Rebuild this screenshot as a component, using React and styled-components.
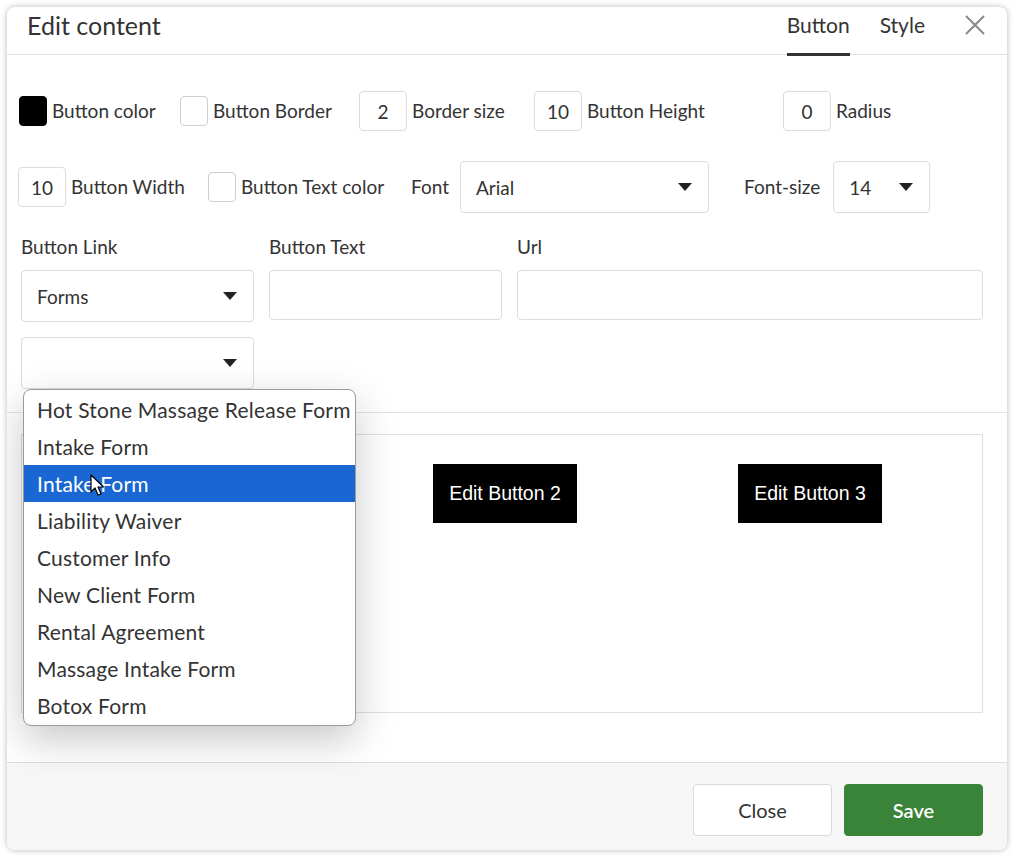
import React from 'react';
import styled, { createGlobalStyle } from 'styled-components';

const GlobalStyle = createGlobalStyle`
  html, body {
    margin: 0;
    padding: 0;
    background: #ffffff;
    font-family: 'Lato', 'Open Sans', sans-serif;
    color: #333;
  }
  * {
    box-sizing: border-box;
  }
`;

const Page = styled.div`
  width: 1015px;
  height: 858px;
  padding: 7px 8px 8px 7px;
`;

const Modal = styled.div`
  width: 1000px;
  height: 843px;
  background: #fff;
  border-radius: 8px;
  box-shadow: 0 0 6px rgba(0, 0, 0, 0.28);
  display: flex;
  flex-direction: column;
  overflow: hidden;
`;

const Header = styled.div`
  height: 48px;
  border-bottom: 1px solid #e3e3e3;
  display: flex;
  align-items: stretch;
  padding: 0 22px 0 20px;
`;

const Title = styled.h2`
  margin: 0;
  font-size: 25px;
  font-weight: 400;
  color: #333;
  flex: 1;
  line-height: 36px;
`;

const Tabs = styled.div`
  display: flex;
  align-items: stretch;
  gap: 30px;
`;

const Tab = styled.div`
  font-size: 21px;
  color: #333;
  line-height: 36px;
  border-bottom: 3px solid ${p => (p.$active ? '#333' : 'transparent')};
  margin-bottom: -2px;
`;

const CloseIcon = styled.button`
  border: 0;
  background: none;
  padding: 0;
  margin-left: 40px;
  height: 36px;
  display: flex;
  align-items: center;
  cursor: pointer;
`;

const Body = styled.div`
  flex: 1;
  padding: 36px 24px 0 14px;
  display: flex;
  flex-direction: column;
`;

const FieldRow = styled.div`
  display: flex;
  align-items: center;
  margin-left: ${p => p.$shift || 0}px;
  margin-top: ${p => p.$top || 0}px;
`;

const Field = styled.div`
  display: flex;
  align-items: center;
  gap: ${p => p.$gap || 5}px;
  width: ${p => (p.$w ? `${p.$w}px` : 'auto')};
  flex: none;
`;

const Swatch = styled.div`
  width: 28px;
  height: 30px;
  border-radius: 4px;
  border: 1px solid ${p => (p.$color === '#000' ? '#000' : '#cfcfcf')};
  background: ${p => p.$color};
`;

const NumberBox = styled.div`
  width: 48px;
  height: 40px;
  border: 1px solid #dcdcdc;
  border-radius: 4px;
  display: flex;
  align-items: center;
  justify-content: center;
  font-size: 19px;
  color: #333;
`;

const Label = styled.span`
  font-size: 19px;
  color: #333;
  white-space: nowrap;
  margin-top: -2px;
`;

const SelectBox = styled.div`
  position: relative;
  width: ${p => p.$w}px;
  height: 52px;
  border: 1px solid #dcdcdc;
  border-radius: 4px;
  display: flex;
  align-items: center;
  justify-content: space-between;
  padding: 0 16px 0 15px;
  font-size: 19px;
  color: #333;
  background: #fff;
`;

const Caret = styled.span`
  width: 0;
  height: 0;
  border-left: 7px solid transparent;
  border-right: 7px solid transparent;
  border-top: 8px solid #222;
`;

const LinkGrid = styled.div`
  display: grid;
  grid-template-columns: 233px 233px 1fr;
  column-gap: 15px;
  margin-top: 23px;
  align-items: start;
`;

const Column = styled.div`
  display: flex;
  flex-direction: column;
  gap: 12px;
`;

const FieldLabel = styled.div`
  font-size: 19px;
  line-height: 22px;
  color: #333;
`;

const TextInput = styled.div`
  height: 50px;
  border: 1px solid #dcdcdc;
  border-radius: 4px;
  background: #fff;
`;

const SubSelect = styled.div`
  margin-top: 15px;
  position: relative;
  width: 233px;
  z-index: 5;
`;

const Dropdown = styled.ul`
  position: absolute;
  top: 52px;
  left: 2px;
  width: 333px;
  margin: 0;
  padding: 1px 0;
  list-style: none;
  background: #fff;
  border: 1px solid #9a9a9a;
  border-radius: 8px;
  box-shadow: 0 14px 40px rgba(0, 0, 0, 0.22);
  overflow: hidden;
`;

const Option = styled.li`
  position: relative;
  height: 37px;
  display: flex;
  align-items: center;
  padding-left: 13px;
  font-size: 21px;
  letter-spacing: 0.2px;
  white-space: nowrap;
  color: ${p => (p.$selected ? '#fff' : '#333')};
  background: ${p => (p.$selected ? '#1a67d4' : 'transparent')};
`;

const Pointer = styled.svg`
  position: absolute;
  left: 66px;
  top: 9px;
`;

const Divider = styled.div`
  height: 1px;
  background: #e3e3e3;
  margin: 23px -24px 0 -14px;
`;

const Preview = styled.div`
  margin-top: 21px;
  height: 279px;
  border: 1px solid #e0e0e0;
  display: flex;
  align-items: flex-start;
  gap: 161px;
  padding: 29px 0 0 106px;
`;

const PreviewButton = styled.div`
  width: 144px;
  height: 59px;
  background: #000;
  color: #fff;
  font-family: 'Liberation Sans', Arial, sans-serif;
  font-size: 19.5px;
  display: flex;
  align-items: center;
  justify-content: center;
`;

const Footer = styled.div`
  height: 88px;
  border-top: 1px solid #dcdcdc;
  background: #f7f7f7;
  display: flex;
  justify-content: flex-end;
  align-items: flex-start;
  gap: 12px;
  padding: 21px 24px 0 0;
`;

const FooterButton = styled.button`
  width: 139px;
  height: 52px;
  border-radius: 4px;
  font-family: 'Lato', sans-serif;
  font-size: 20px;
  font-weight: ${p => (p.$primary ? 600 : 400)};
  border: 1px solid ${p => (p.$primary ? '#3a8439' : '#d9d9d9')};
  background: ${p => (p.$primary ? '#3a8439' : '#fff')};
  color: ${p => (p.$primary ? '#fff' : '#333')};
  cursor: pointer;
`;

const forms = [
  'Hot Stone Massage Release Form',
  'Intake Form',
  'Intake Form',
  'Liability Waiver',
  'Customer Info',
  'New Client Form',
  'Rental Agreement',
  'Massage Intake Form',
  'Botox Form',
];

const App = () => {
  return (
    <Page>
      <GlobalStyle />
      <Modal>
        <Header>
          <Title>Edit content</Title>
          <Tabs>
            <Tab $active>Button</Tab>
            <Tab>Style</Tab>
          </Tabs>
          <CloseIcon aria-label="Close">
            <svg width="20" height="20" viewBox="0 0 20 20">
              <path d="M1 1 L19 19 M19 1 L1 19" stroke="#8a8a8a" strokeWidth="2" fill="none" />
            </svg>
          </CloseIcon>
        </Header>

        <Body>
          <FieldRow $shift={-2}>
            <Field $w={161}>
              <Swatch $color="#000" />
              <Label>Button color</Label>
            </Field>
            <Field $w={179}>
              <Swatch $color="#fff" />
              <Label>Button Border</Label>
            </Field>
            <Field $w={175}>
              <NumberBox>2</NumberBox>
              <Label>Border size</Label>
            </Field>
            <Field $w={249}>
              <NumberBox>10</NumberBox>
              <Label>Button Height</Label>
            </Field>
            <Field>
              <NumberBox>0</NumberBox>
              <Label>Radius</Label>
            </Field>
          </FieldRow>

          <FieldRow $shift={-3} $top={30}>
            <Field $w={190}>
              <NumberBox>10</NumberBox>
              <Label>Button Width</Label>
            </Field>
            <Field $w={203}>
              <Swatch $color="#fff" />
              <Label>Button Text color</Label>
            </Field>
            <Field $w={333} $gap={11}>
              <Label>Font</Label>
              <SelectBox $w={249}>
                Arial
                <Caret />
              </SelectBox>
            </Field>
            <Field $gap={13}>
              <Label>Font-size</Label>
              <SelectBox $w={97}>
                14
                <Caret />
              </SelectBox>
            </Field>
          </FieldRow>

          <LinkGrid>
            <Column>
              <FieldLabel>Button Link</FieldLabel>
              <SelectBox $w={233}>
                Forms
                <Caret />
              </SelectBox>
            </Column>
            <Column>
              <FieldLabel>Button Text</FieldLabel>
              <TextInput />
            </Column>
            <Column>
              <FieldLabel>Url</FieldLabel>
              <TextInput />
            </Column>
          </LinkGrid>

          <SubSelect>
            <SelectBox $w={233}>
              <span />
              <Caret />
            </SelectBox>
            <Dropdown>
              {forms.map((f, i) => (
                <Option key={i} $selected={i === 2}>
                  {f}
                  {i === 2 && (
                    <Pointer width="16" height="24" viewBox="0 0 16 24">
                      <path
                        d="M1 1 L1 18 L5 14 L8 21 L11 20 L8 13 L13.5 13 Z"
                        fill="#fff"
                        stroke="#000"
                        strokeWidth="1.2"
                        strokeLinejoin="round"
                      />
                    </Pointer>
                  )}
                </Option>
              ))}
            </Dropdown>
          </SubSelect>

          <Divider />

          <Preview>
            <PreviewButton>Edit Button 1</PreviewButton>
            <PreviewButton>Edit Button 2</PreviewButton>
            <PreviewButton>Edit Button 3</PreviewButton>
          </Preview>
        </Body>

        <Footer>
          <FooterButton>Close</FooterButton>
          <FooterButton $primary>Save</FooterButton>
        </Footer>
      </Modal>
    </Page>
  );
};

export default App;
